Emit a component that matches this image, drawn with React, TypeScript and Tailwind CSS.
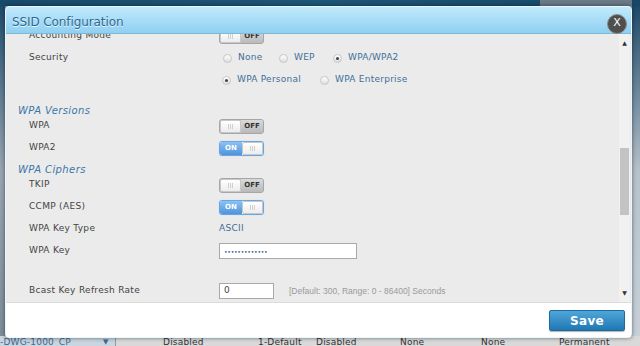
import React from "react";

const font = { fontFamily: '"DejaVu Sans", Verdana, sans-serif' };

function Knob() {
  return (
    <div className="flex-1 flex items-center justify-center gap-[1px] bg-linear-to-b from-white to-[#ececec] border border-[#c8c8c8] rounded-[2px]">
      <span className="w-px h-[5px] bg-[#cfcfcf]" />
      <span className="w-px h-[5px] bg-[#cfcfcf]" />
      <span className="w-px h-[5px] bg-[#cfcfcf]" />
    </div>
  );
}

function Toggle({ on }: { on: boolean }) {
  if (on) {
    return (
      <div className="flex w-[45px] h-[15px] rounded-[3px] border border-[#69a6df] overflow-hidden bg-white shadow-[0_0_1px_#9cc8ee]">
        <div className="w-[22px] flex items-center justify-center bg-linear-to-b from-[#8cc2f2] to-[#4f93dc] text-white text-[7px] font-bold">
          ON
        </div>
        <Knob />
      </div>
    );
  }
  return (
    <div className="flex w-[45px] h-[15px] rounded-[3px] border border-[#a6a6a6] overflow-hidden bg-[#c8c8c8]">
      <Knob />
      <div className="w-[22px] flex items-center justify-center bg-linear-to-b from-[#dadada] to-[#b9b9b9] text-[#333] text-[7px] font-bold">
        OFF
      </div>
    </div>
  );
}

function Radio({ label, checked, width }: { label: string; checked?: boolean; width: string }) {
  return (
    <div className={"flex items-center " + width}>
      <span className="w-[9px] h-[9px] rounded-full border border-[#c6c6c6] bg-linear-to-b from-white to-[#dedede] flex items-center justify-center">
        {checked && <span className="w-[3px] h-[3px] rounded-full bg-[#444]" />}
      </span>
      <span className="ml-[6px] text-[#3f6f98] tracking-[0.25px]">{label}</span>
    </div>
  );
}

function Row({ label, children }: { label: string; children?: React.ReactNode }) {
  return (
    <div className="flex items-center h-[22px]">
      <div className="w-[213px] pl-[23px] text-[#444] tracking-[0.3px]">{label}</div>
      {children}
    </div>
  );
}

export default function App() {
  return (
    <div className="relative w-[640px] h-[346px] overflow-hidden flex flex-col bg-[#8e9ca8]" style={font}>
      {/* page behind the dialog */}
      <div className="h-[6px] flex bg-linear-to-r from-[#184a6b] via-[#1e5678] to-[#174766]">
        <div className="flex-1" />
        <div className="w-[92px] mr-[8px] bg-[#6b7a87]" />
      </div>
      <div className="flex-1 flex">
        <div className="w-[5px] bg-linear-to-b from-[#1f4d6c] via-[#9aa7b2] to-[#7d8d9a]" />
        <div className="flex-1" />
        <div className="w-[8px] bg-linear-to-b from-[#1e4a68] via-[#b7c2cb] to-[#c7d0d8]" />
      </div>
      <div className="h-[10px] flex text-[9px] leading-[12px] text-[#333] tracking-[0.2px]">
        <div className="w-[116px] flex bg-[#c9d5df] border-r border-[#999] text-[#3d6b93]">
          <span className="flex-1">-DWG-1000_CP</span>
          <span className="w-[12px] text-[7px]">▼</span>
        </div>
        <div className="flex-1 flex bg-[#d9d9d9]">
          <span className="ml-[47px] w-[95px]">Disabled</span>
          <span className="w-[58px]">1-Default</span>
          <span className="w-[84px]">Disabled</span>
          <span className="w-[81px]">None</span>
          <span className="w-[78px]">None</span>
          <span>Permanent</span>
        </div>
      </div>

      {/* dialog */}
      <div className="absolute left-[5px] top-[6px] w-[627px] h-[332px] flex flex-col rounded-[4px] overflow-hidden border border-[#e8f6fd] bg-white shadow-[0_0_4px_rgba(0,0,0,0.5)]">
        <div className="h-[27px] shrink-0 flex items-center justify-between pl-[6px] pr-[4px] pt-[3px] bg-linear-to-b from-[#c0eafc] to-[#8fd0f1] border-b border-[#7fb9d9]">
          <span className="text-[12px] text-[#2e6892] tracking-[-0.1px] [text-shadow:0_1px_0_rgba(255,255,255,0.8)]">
            SSID Configuration
          </span>
          <span className="w-[20px] h-[20px] rounded-full bg-[#4f4f4f] border border-[#8a8a8a] flex items-center justify-center text-white text-[11px] mt-[4px]">
            X
          </span>
        </div>

        <div className="h-[268px] shrink-0 flex bg-[#ebebeb]">
          <div className="flex-1 overflow-hidden text-[9px]">
            <div className="-mt-[9px]">
              <Row label="Accounting Mode">
                <Toggle on={false} />
              </Row>
              <Row label="Security">
                <div className="flex ml-[4px]">
                  <Radio label="None" width="w-[56px]" />
                  <Radio label="WEP" width="w-[54px]" />
                  <Radio label="WPA/WPA2" checked width="w-[80px]" />
                </div>
              </Row>
              <Row label="">
                <div className="flex ml-[3px]">
                  <Radio label="WPA Personal" checked width="w-[98px]" />
                  <Radio label="WPA Enterprise" width="w-[100px]" />
                </div>
              </Row>
              <div className="h-[24px] pt-[14px] pl-[12px] leading-[12px] text-[10px] italic text-[#3a76a8] tracking-[0.4px]">
                WPA Versions
              </div>
              <Row label="WPA">
                <Toggle on={false} />
              </Row>
              <Row label="WPA2">
                <Toggle on />
              </Row>
              <div className="h-[15px] pt-[5px] pl-[12px] leading-[12px] text-[10px] italic text-[#3a76a8] tracking-[0.4px]">
                WPA Ciphers
              </div>
              <Row label="TKIP">
                <Toggle on={false} />
              </Row>
              <Row label="CCMP (AES)">
                <Toggle on />
              </Row>
              <Row label="WPA Key Type">
                <span className="text-[#3f6f98] tracking-[0.3px]">ASCII</span>
              </Row>
              <Row label="WPA Key">
                <div className="w-[138px] h-[16px] border border-[#a9a9a9] bg-white flex items-center pl-[4px] text-[6px] text-[#2d5f8e] tracking-[-0.2px]">
                  •••••••••••••
                </div>
              </Row>
              <div className="h-[18px]" />
              <Row label="Bcast Key Refresh Rate">
                <div className="w-[55px] h-[16px] border border-[#a9a9a9] bg-white flex items-center pl-[4px] text-[#444]">
                  0
                </div>
                <span className="ml-[15px] text-[#9a9a9a] text-[8.5px] [font-family:'Liberation_Sans',Arial,sans-serif]">
                  [Default: 300, Range: 0 - 86400] Seconds
                </span>
              </Row>
            </div>
          </div>
          <div className="w-[11px] mr-[1px] flex flex-col bg-[#f1f1f1]">
            <div className="h-[14px] flex items-end justify-center pb-[2px] text-[6px] leading-[6px] text-[#333]">▲</div>
            <div className="h-[100px]" />
            <div className="h-[67px] mx-[1px] bg-[#c3c3c3]" />
            <div className="flex-1" />
            <div className="h-[12px] flex items-start justify-center text-[6px] leading-[6px] text-[#333]">▼</div>
          </div>
        </div>

        <div className="flex-1 flex items-start justify-end pt-[7px] pr-[6px] bg-white border-t border-[#dcdcdc]">
          <button className="w-[76px] h-[21px] rounded-[2px] border border-[#1d6a9e] bg-linear-to-b from-[#4fa6da] to-[#1f78b3] text-white text-[12px] font-bold tracking-[0.3px] shadow-[0_1px_1px_rgba(0,0,0,0.3)]">
            Save
          </button>
        </div>
      </div>
    </div>
  );
}
